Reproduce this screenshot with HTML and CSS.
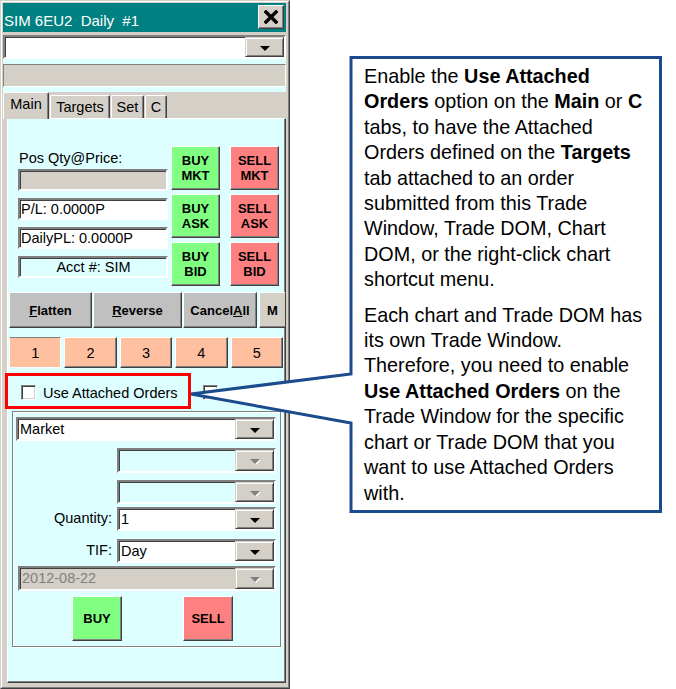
FILE: index.html
```html
<!DOCTYPE html>
<html>
<head>
<meta charset="utf-8">
<title>Trade Window</title>
<link rel="stylesheet" href="styles.css">
</head>
<body>
<div class="window">
  <div class="window-in">
    <div class="titlebar">
      <span class="title">SIM 6EU2  Daily  #1</span>
      <button class="close" aria-label="Close">
        <svg width="14" height="14" viewBox="0 0 14 14"><path d="M2 2 L12 12 M12 2 L2 12" stroke="#000" stroke-width="3.4" stroke-linecap="square"/></svg>
      </button>
    </div>
    <div class="client">
      <div class="combo combo-top"><span class="combo-text"></span><span class="combo-btn"><i class="arrow"></i></span></div>
      <div class="status-box"></div>
    </div>
    <div class="tabs">
      <div class="tab-strip">
        <span class="tab tab-active tab-main">Main</span>
        <span class="tab tab-targets">Targets</span>
        <span class="tab tab-set">Set</span>
        <span class="tab tab-c">C</span>
      </div>
      <div class="tab-panel">
        <div class="quick">
          <div class="info-col">
            <div class="lbl">Pos Qty@Price:</div>
            <div class="field field-gray field-first"></div>
            <div class="field">P/L: 0.0000P</div>
            <div class="field">DailyPL: 0.0000P</div>
            <div class="field field-cyan">Acct #: SIM</div>
          </div>
          <div class="btn-col">
            <button class="qbtn buy">BUY<br>MKT</button>
            <button class="qbtn buy">BUY<br>ASK</button>
            <button class="qbtn buy">BUY<br>BID</button>
          </div>
          <div class="btn-col sell-col">
            <button class="qbtn sell">SELL<br>MKT</button>
            <button class="qbtn sell">SELL<br>ASK</button>
            <button class="qbtn sell">SELL<br>BID</button>
          </div>
        </div>
        <div class="flat-row">
          <button class="fbtn f-flatten"><u>F</u>latten</button>
          <button class="fbtn f-reverse"><u>R</u>everse</button>
          <button class="fbtn f-cancel">Cancel<u>A</u>ll</button>
          <button class="fbtn f-more">M</button>
        </div>
        <div class="num-row">
          <button class="nbtn nbtn-first">1</button>
          <button class="nbtn">2</button>
          <button class="nbtn">3</button>
          <button class="nbtn">4</button>
          <button class="nbtn">5</button>
        </div>
        <div class="check-row">
          <span class="cb"></span>
          <span class="cb-label">Use Attached Orders</span>
          <span class="cb"></span>
        </div>
        <div class="group">
          <div class="combo"><span class="combo-text">Market</span><span class="combo-btn"><i class="arrow"></i></span></div>
          <div class="frow frow-2"><div class="combo combo-dis"><span class="combo-text"></span><span class="combo-btn"><i class="arrow arrow-dis"></i></span></div></div>
          <div class="frow frow-3"><div class="combo combo-dis"><span class="combo-text"></span><span class="combo-btn"><i class="arrow arrow-dis"></i></span></div></div>
          <div class="frow frow-qty"><span class="flbl">Quantity:</span><div class="combo"><span class="combo-text">1</span><span class="combo-btn"><i class="arrow"></i></span></div></div>
          <div class="frow frow-tif"><span class="flbl">TIF:</span><div class="combo"><span class="combo-text">Day</span><span class="combo-btn"><i class="arrow"></i></span></div></div>
          <div class="combo combo-date"><span class="combo-text">2012-08-22</span><span class="combo-btn"><i class="arrow arrow-dis"></i></span></div>
          <div class="order-row">
            <button class="obtn buy obtn-buy">BUY</button>
            <button class="obtn sell obtn-sell">SELL</button>
          </div>
        </div>
      </div>
    </div>
  </div>
</div>

<div class="callout">
  <svg class="bubble" width="676" height="689" viewBox="0 0 676 689">
    <polygon points="351,57.5 660.5,57.5 660.5,511.5 351,511.5 351,423 191,394 351,374" fill="#fff" stroke="#1b4b8c" stroke-width="3"/>
  </svg>
  <div class="hl-box"></div>
  <div class="callout-text">
    <p>Enable the <b>Use Attached</b><br><b>Orders</b> option on the <b>Main</b> or <b>C</b><br>tabs, to have the Attached<br>Orders defined on the <b>Targets</b><br>tab attached to an order<br>submitted from this Trade<br>Window, Trade DOM, Chart<br>DOM, or the right-click chart<br>shortcut menu.</p>
    <p>Each chart and Trade DOM has<br>its own Trade Window.<br>Therefore, you need to enable<br><b>Use Attached Orders</b> on the<br>Trade Window for the specific<br>chart or Trade DOM that you<br>want to use Attached Orders<br>with.</p>
  </div>
</div>
</body>
</html>
```

FILE: styles.css
```css
* { box-sizing: border-box; }
html, body { margin: 0; padding: 0; }
body {
  position: relative;
  width: 676px;
  height: 689px;
  overflow: hidden;
  background: #fff;
  font-family: "Liberation Sans", Arial, sans-serif;
  color: #000;
}
button { font-family: "Liberation Sans", Arial, sans-serif; color: #000; padding: 0; margin: 0; }

.window {
  width: 290px;
  height: 689px;
  background: #d4d0c8;
  border: 1px solid;
  border-color: #d4d0c8 #404040 #404040 #d4d0c8;
}
.window-in {
  height: 100%;
  display: flex;
  flex-direction: column;
  border: 1px solid;
  border-color: #fff #808080 #808080 #fff;
  padding: 1px 2px 1px 1px;
}

/* title bar */
.titlebar {
  flex: none;
  height: 29px;
  background: #008080;
  display: flex;
  justify-content: space-between;
  align-items: flex-start;
}
.title {
  color: #fff;
  font-size: 15px;
  line-height: 18px;
  white-space: pre;
  margin: 9px 0 0 1px;
}
.close {
  width: 26px;
  height: 24px;
  margin: 2px 2px 0 0;
  background: #d4d0c8;
  border: 1px solid;
  border-color: #fff #404040 #404040 #fff;
  box-shadow: inset -1px -1px #808080;
  display: flex;
  align-items: center;
  justify-content: center;
}

/* client top area */
.client {
  flex: none;
  margin-top: 3px;
  background: #ddffff;
  display: flex;
  flex-direction: column;
  gap: 5px;
  padding-bottom: 5px;
}
.status-box {
  height: 23px;
  background: #d4d0c8;
  border: 1px solid;
  border-color: #808080 #fff #fff #808080;
}

/* combo box */
.combo {
  display: flex;
  height: 24px;
  background: #fff;
  border: 2px solid;
  border-color: #808080 #fff #fff #808080;
  box-shadow: inset 1px 1px #404040;
}
.combo-text {
  flex: 1;
  font-size: 14.5px;
  line-height: 20px;
  padding-left: 2px;
  white-space: nowrap;
  overflow: hidden;
}
.combo-btn {
  flex: none;
  width: 39px;
  height: 100%;
  background: #d4d0c8;
  border: 1px solid;
  border-color: #d4d0c8 #404040 #404040 #d4d0c8;
  box-shadow: inset 1px 1px #fff, inset -1px -1px #808080;
  display: flex;
  align-items: center;
  justify-content: center;
}
.arrow {
  display: block;
  width: 0;
  height: 0;
  margin-top: 2px;
  border-left: 5px solid transparent;
  border-right: 5px solid transparent;
  border-top: 5px solid #000;
}
.arrow-dis {
  border-top-color: #808080;
  filter: drop-shadow(1px 1px 0 #fff);
}

/* tabs */
.tabs {
  flex: 1;
  display: flex;
  flex-direction: column;
}
.tab-strip {
  flex: none;
  height: 26px;
  display: flex;
  align-items: flex-end;
  gap: 1px;
  position: relative;
  z-index: 2;
}
.tab {
  height: 23px;
  display: flex;
  align-items: center;
  justify-content: center;
  font-size: 14.5px;
  line-height: 17px;
  background: #d4d0c8;
  border: 1px solid;
  border-bottom: none;
  border-color: #fff #404040 #fff #fff;
  box-shadow: inset -1px 0 #808080;
  border-radius: 2px 2px 0 0;
}
.tab-active {
  height: 27px;
  margin-bottom: -1px;
  padding-bottom: 3px;
}
.tab-main { width: 46px; }
.tab-targets { width: 60px; }
.tab-set { width: 33px; }
.tab-c { width: 22px; }

.tab-panel {
  flex: 1;
  margin: 0 0 3px 4px;
  background: #ddffff;
  border: 1px solid;
  border-color: #fff #404040 #404040 #fff;
  box-shadow: inset -1px -1px #808080;
  overflow: hidden;
  position: relative;
  z-index: 1;
}

/* quick order area */
.quick {
  display: flex;
  margin: 27px 0 0 10px;
}
.info-col {
  width: 150px;
  margin-right: 3px;
  display: flex;
  flex-direction: column;
}
.lbl {
  font-size: 14.5px;
  line-height: 17px;
  margin-top: 4px;
  padding-left: 1px;
  white-space: nowrap;
}
.field {
  height: 22px;
  margin-top: 7px;
  background: #fff;
  border: 2px solid;
  border-color: #808080 #fff #fff #808080;
  box-shadow: inset 1px 1px #404040;
  font-size: 14.5px;
  line-height: 18px;
  padding-left: 1px;
  white-space: nowrap;
}
.field-first { margin-top: 2px; }
.field-gray { background: #d4d0c8; }
.field-cyan { background: #ddffff; text-align: center; }

.btn-col {
  width: 49px;
  display: flex;
  flex-direction: column;
  gap: 4px;
}
.sell-col { margin-left: 10px; }

.qbtn, .obtn, .fbtn, .nbtn {
  border: 1px solid;
  border-color: #fff #404040 #404040 #fff;
  box-shadow: inset -1px -1px #808080;
}
.qbtn {
  width: 49px;
  height: 44px;
  font-weight: bold;
  font-size: 13px;
  line-height: 15px;
}
.buy { background: #80ff80; }
.sell { background: #ff8080; }

/* flatten row */
.flat-row {
  display: flex;
  height: 36px;
  margin: 6px 0 0 1px;
}
.fbtn {
  height: 36px;
  background: #c0c0c0;
  font-weight: bold;
  font-size: 13px;
  flex: none;
}
.f-flatten { width: 83px; }
.f-reverse { width: 89px; margin-left: 1px; }
.f-cancel { width: 74px; margin-left: 1px; }
.f-more {
  width: 40px;
  margin-left: 2px;
  background: #d4d0c8;
  text-align: left;
  padding-left: 7px;
}

/* number row */
.num-row {
  display: grid;
  grid-template-columns: repeat(5, 1fr);
  gap: 3px;
  height: 31px;
  margin: 9px 2px 0 1px;
}
.nbtn {
  background: #ffc0a0;
  font-size: 14.5px;
}
.nbtn-first {
  border-color: #808080 #fff #fff #fff;
  box-shadow: none;
}

/* checkbox row */
.check-row {
  display: flex;
  align-items: center;
  height: 25px;
  margin-top: 12px;
  padding-left: 13px;
}
.cb {
  flex: none;
  width: 15px;
  height: 15px;
  background: #fff;
  border: 1px solid;
  border-color: #808080 #fff #fff #808080;
  box-shadow: inset 1px 1px #404040, inset -1px -1px #d4d0c8;
}
.cb-label {
  width: 160px;
  margin-left: 7px;
  font-size: 14.5px;
  white-space: nowrap;
}

/* order group */
.group {
  margin: 6px 0 0 4px;
  width: 269px;
  height: 236px;
  border: 1px solid #808080;
  box-shadow: inset 1px 1px #fff, 1px 1px 0 #fff;
  padding: 5px 4px 0 3px;
  display: flex;
  flex-direction: column;
}
.frow {
  display: flex;
  justify-content: flex-end;
  align-items: center;
}
.frow .combo { width: 159px; }
.frow-2 { margin-top: 7px; }
.frow-2 .combo { height: 25px; }
.frow-3 { margin-top: 7px; }
.frow-qty { margin-top: 3px; }
.frow-tif { margin-top: 8px; }
.combo-dis { background: #ddffff; }
.flbl {
  font-size: 14.5px;
  margin-right: 5px;
  margin-top: -2px;
}
.combo-date {
  margin: 3px 0 0 2px;
  height: 25px;
  background: #d4d0c8;
  color: #808080;
}
.order-row {
  display: flex;
  margin-top: 5px;
}
.obtn {
  width: 50px;
  height: 45px;
  font-weight: bold;
  font-size: 13px;
}
.obtn-buy { margin-left: 56px; }
.obtn-sell { margin-left: 61px; }

/* annotation overlay */
.callout {
  position: absolute;
  left: 0;
  top: 0;
  width: 676px;
  height: 689px;
  pointer-events: none;
  z-index: 10;
}
.bubble {
  position: absolute;
  left: 0;
  top: 0;
}
.hl-box {
  position: absolute;
  left: 5px;
  top: 373px;
  width: 186px;
  height: 36px;
  border: 3px solid #ff0000;
}
.callout-text {
  position: absolute;
  left: 364px;
  top: 64px;
  font-size: 19.8px;
  line-height: 25.4px;
  white-space: nowrap;
}
.callout-text p { margin: 0; }
.callout-text p + p { margin-top: 10px; }
```
